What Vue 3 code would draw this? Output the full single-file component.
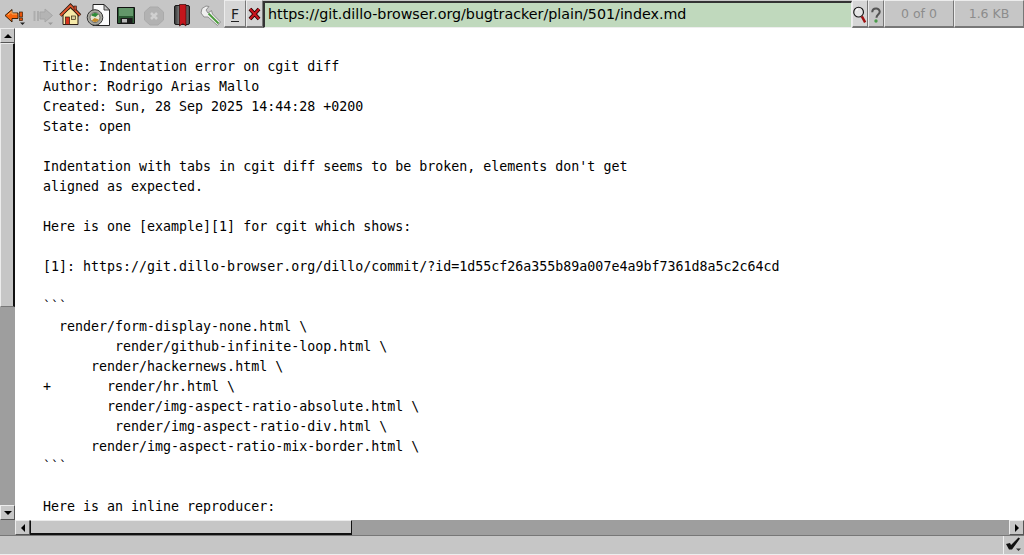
<template>
  <div class="browser">
    <div class="toolbar">
      <div class="tool-btn">
        <svg width="28" height="28" viewBox="0 0 28 28">
          <path d="M5 15.5 L12 9.5 V13 H18 V18.5 H12 V22 Z" fill="#f5650c" stroke="#3a2008" stroke-width="1"/>
          <path d="M8 15 L12 11.5 V14 H17" fill="none" stroke="#ffb060" stroke-width="1"/>
          <rect x="19.5" y="12" width="3" height="5" fill="#e8540a" stroke="#3a2008" stroke-width=".7"/>
          <rect x="19.5" y="18" width="3" height="2.6" fill="#e8540a" stroke="#3a2008" stroke-width=".7"/>
          <path d="M20 22.5 H25 L22.5 25 Z" fill="#222"/>
        </svg>
      </div>
      <div class="tool-btn">
        <svg width="28" height="28" viewBox="0 0 28 28">
          <path d="M5.5 11 H7.5 V21 H5.5 Z M9 11 H11 V21 H9 Z" fill="#adadad"/>
          <path d="M12 12 H17 V9 L24.5 15.5 L17 22 V19 H12 Z" fill="#b4b4b4" stroke="#a6a6a6"/>
          <path d="M20 22.5 H25 L22.5 25 Z" fill="#9a9a9a"/>
        </svg>
      </div>
      <div class="tool-btn">
        <svg width="28" height="28" viewBox="0 0 28 28">
          <path d="M7 14 V24.5 H22 V14 L14.5 8 Z" fill="#f6e9a8" stroke="#2a1a10" stroke-width="1"/>
          <path d="M4.5 15.5 L14.5 5.5 L24 15.5" fill="none" stroke="#2a1a10" stroke-width="3.4"/>
          <path d="M4.5 15.5 L14.5 5.5 L24 15.5" fill="none" stroke="#e0562e" stroke-width="1.8"/>
          <rect x="18" y="6" width="2.5" height="4" fill="#c8452a" stroke="#2a1a10" stroke-width=".6"/>
          <rect x="9.5" y="17" width="4" height="7.5" fill="#d8331c" stroke="#2a1a10" stroke-width=".7"/>
          <rect x="15.5" y="16" width="4" height="3.5" fill="#d8d0a0" stroke="#3a2a10" stroke-width=".7"/>
        </svg>
      </div>
      <div class="tool-btn">
        <svg width="28" height="28" viewBox="0 0 28 28">
          <path d="M9 4.5 H20 L25.5 10 V25.5 H9 Z" fill="#fbfbfb" stroke="#222" stroke-width="1"/>
          <path d="M20 4.5 V10 H25.5 Z" fill="#c4c4c4" stroke="#222" stroke-width=".8"/>
          <circle cx="11" cy="17.5" r="7.8" fill="#a8a8a0" stroke="#333" stroke-width="1"/>
          <circle cx="11" cy="17.5" r="5" fill="#e8e4d0" stroke="#555" stroke-width=".8"/>
          <path d="M7.2 15.5 A4.2 4.2 0 0 1 14.2 14.5 L11.5 17 Z" fill="#2f8a3a"/>
          <path d="M14.8 19.5 A4.2 4.2 0 0 1 7.8 20.5 L10.5 18 Z" fill="#c48a2a"/>
        </svg>
      </div>
      <div class="tool-btn">
        <svg width="28" height="28" viewBox="0 0 28 28">
          <path d="M5.5 7.5 H22.5 V23.5 H5.5 Z" fill="#2c5a34" stroke="#111" stroke-width="1"/>
          <rect x="7" y="8" width="14" height="8" fill="#63976a"/>
          <rect x="8.5" y="18" width="12" height="5.5" fill="#1c1c1c"/>
          <rect x="10" y="19" width="5" height="3.5" fill="#b8b8b8"/>
        </svg>
      </div>
      <div class="tool-btn">
        <svg width="28" height="28" viewBox="0 0 28 28">
          <path d="M10 7 H18 L23.5 12 V20 L18 25 H10 L4.5 20 V12 Z" fill="#b2b2b2" stroke="#aaa"/>
          <path d="M11 13 L17 19 M17 13 L11 19" stroke="#d0d0d0" stroke-width="2.6"/>
        </svg>
      </div>
      <div class="tool-btn">
        <svg width="28" height="28" viewBox="0 0 28 28">
          <defs>
            <linearGradient id="cover" x1="0" x2="1" y1="0" y2="0">
              <stop offset="0" stop-color="#303030"/>
              <stop offset=".5" stop-color="#a8a8a8"/>
              <stop offset="1" stop-color="#404040"/>
            </linearGradient>
          </defs>
          <rect x="6.5" y="5.5" width="15" height="19" rx="1.5" fill="url(#cover)" stroke="#1a1a1a"/>
          <path d="M11.5 4.5 H18 V26 L14.75 23.5 L11.5 26 Z" fill="#c4161c" stroke="#3a0808" stroke-width=".7"/>
        </svg>
      </div>
      <div class="tool-btn">
        <svg width="28" height="28" viewBox="0 0 28 28">
          <path d="M5 13 L6 8.5 L10 6 L13 6.5 L10 10 L12 13 L15.5 10.5 L16.5 14 L24.5 22 L21.5 25.5 L12 17 L8 17 Z" fill="#efefef" stroke="#8f8f8f"/>
          <path d="M12.5 13.5 L22.5 23.5" stroke="#4a9a3a" stroke-width="1.8"/>
        </svg>
      </div>
      <div class="raised f-btn"><span>F</span></div>
      <div class="raised x-btn">
        <svg width="13" height="14" viewBox="0 0 13 14">
          <path d="M2 2 L11 12 M11 2 L2 12" stroke="#200" stroke-width="3.8"/>
          <path d="M2 2 L11 12 M11 2 L2 12" stroke="#c8141c" stroke-width="2.1"/>
        </svg>
      </div>
      <div class="url">{{ url }}</div>
      <div class="raised search-btn">
        <svg width="15" height="26" viewBox="0 0 15 26">
          <circle cx="6" cy="11" r="5.2" fill="#e6e6e6" stroke="#111" stroke-width="1.2"/>
          <path d="M3.5 9 L5 7.8" stroke="#fff" stroke-width="1.6"/>
          <path d="M9.5 15.5 L13 22" stroke="#a01010" stroke-width="2.6"/>
        </svg>
      </div>
      <div class="raised help-btn">
        <svg width="15" height="26" viewBox="0 0 15 26">
          <path d="M3.5 11 C3.5 6 11.5 6 11.5 10.5 C11.5 13.5 8 13.5 8 17" fill="none" stroke="#555" stroke-width="2.2"/>
          <circle cx="7.5" cy="20.5" r="1.8" fill="#4a9a4a"/>
        </svg>
      </div>
      <div class="raised info find-count">0 of 0</div>
      <div class="raised info page-size">1.6 KB</div>
    </div>

    <div class="main">
      <div class="vscroll">
        <div class="sb-btn"><i class="arrow up"></i></div>
        <div class="thumb-v"></div>
        <div class="trough"></div>
        <div class="sb-btn"><i class="arrow down"></i></div>
      </div>
      <pre class="page">{{ pageText }}</pre>
    </div>

    <div class="hscroll">
      <div class="corner"></div>
      <div class="sb-btn"><i class="arrow left"></i></div>
      <div class="thumb-h"></div>
      <div class="trough"></div>
      <div class="sb-btn"><i class="arrow right"></i></div>
    </div>

    <div class="status">
      <div class="status-text"></div>
      <div class="status-check">
        <svg width="19" height="18" viewBox="0 0 19 18">
          <path d="M2 8 L6 7 L7 9 L14.5 1.5 L16 2.5 L8 13.5 L5 13.5 Z" fill="#111"/>
          <path d="M12 12.5 H17 L14.5 15 Z" fill="#333"/>
        </svg>
      </div>
    </div>
  </div>
</template>

<script setup>
const url = "https://git.dillo-browser.org/bugtracker/plain/501/index.md";

const pageText = `Title: Indentation error on cgit diff
Author: Rodrigo Arias Mallo
Created: Sun, 28 Sep 2025 14:44:28 +0200
State: open

Indentation with tabs in cgit diff seems to be broken, elements don't get
aligned as expected.

Here is one [example][1] for cgit which shows:

[1]: https://git.dillo-browser.org/dillo/commit/?id=1d55cf26a355b89a007e4a9bf7361d8a5c2c64cd

\`\`\`
  render/form-display-none.html \\
         render/github-infinite-loop.html \\
      render/hackernews.html \\
+       render/hr.html \\
        render/img-aspect-ratio-absolute.html \\
         render/img-aspect-ratio-div.html \\
      render/img-aspect-ratio-mix-border.html \\
\`\`\`

Here is an inline reproducer:`;
</script>

<style>
html,
body {
  margin: 0;
  background: #c6c6c6;
}
</style>

<style scoped>
.browser {
  width: 1024px;
  height: 555px;
  display: flex;
  flex-direction: column;
  background: #c6c6c6;
  overflow: hidden;
}

.toolbar {
  display: flex;
  height: 28px;
  flex: none;
}

.tool-btn {
  width: 28px;
  height: 28px;
  flex: none;
}

.tool-btn svg,
.raised svg,
.status-check svg {
  display: block;
}

.raised {
  box-sizing: border-box;
  height: 28px;
  border-top: 1px solid #ececec;
  border-left: 1px solid #ececec;
  border-right: 1px solid #777;
  border-bottom: 2px solid #777;
  display: flex;
  align-items: center;
  justify-content: center;
  flex: none;
}

.f-btn {
  width: 22px;
  background: #d6d6d6;
  font-family: "DejaVu Sans", sans-serif;
  font-size: 14px;
  color: #222;
}

.f-btn span {
  border-bottom: 1px solid #222;
  line-height: 13px;
  margin-top: 3px;
}

.x-btn {
  width: 17px;
  background: #d2d2d2;
}

.url {
  width: 589px;
  flex: none;
  box-sizing: border-box;
  height: 27px;
  margin-top: 1px;
  background: #c0d9bd;
  border-top: 2px solid #333;
  border-left: 2px solid #333;
  border-right: 1px solid #eee;
  border-bottom: 1px solid #eee;
  padding-left: 3px;
  font-family: "DejaVu Sans", sans-serif;
  font-size: 14.27px;
  line-height: 23px;
  color: #000;
  white-space: nowrap;
  overflow: hidden;
}

.search-btn {
  width: 16px;
  background: #d6d6d6;
}

.help-btn {
  width: 16px;
}

.info {
  font-family: "DejaVu Sans", sans-serif;
  font-size: 12.5px;
  color: #8c8c8c;
}

.find-count {
  width: 70px;
}

.page-size {
  flex: 1;
}

.main {
  flex: 1;
  display: flex;
  min-height: 0;
}

.vscroll {
  width: 15px;
  flex: none;
  display: flex;
  flex-direction: column;
  background: #9e9e9e;
}

.sb-btn {
  width: 15px;
  height: 15px;
  flex: none;
  box-sizing: border-box;
  background: #c6c6c6;
  border-top: 1px solid #ececec;
  border-left: 1px solid #ececec;
  border-right: 1px solid #555;
  border-bottom: 1px solid #555;
  display: flex;
  align-items: center;
  justify-content: center;
}

.thumb-v {
  height: 264px;
  flex: none;
  box-sizing: border-box;
  background: #c6c6c6;
  border-top: 1px solid #ececec;
  border-left: 1px solid #ececec;
  border-right: 2px solid #111;
  border-bottom: 1px solid #777;
}

.trough {
  flex: 1;
  background: #9e9e9e;
}

.arrow {
  width: 0;
  height: 0;
  display: block;
}

.arrow.up {
  border: 4px solid transparent;
  border-top: 0;
  border-bottom: 4px solid #000;
}

.arrow.down {
  border: 4px solid transparent;
  border-bottom: 0;
  border-top: 4px solid #000;
}

.arrow.left {
  border: 4px solid transparent;
  border-left: 0;
  border-right: 4px solid #000;
}

.arrow.right {
  border: 4px solid transparent;
  border-right: 0;
  border-left: 4px solid #000;
}

.page {
  flex: 1;
  margin: 0;
  padding: 29px 0 0 28px;
  background: #fff;
  color: #000;
  font-family: "DejaVu Sans Mono", monospace;
  font-size: 13.3px;
  line-height: 20px;
  overflow: hidden;
}

.hscroll {
  display: flex;
  height: 15px;
  flex: none;
}

.corner {
  width: 15px;
  flex: none;
  background: #9e9e9e;
}

.thumb-h {
  width: 322px;
  flex: none;
  box-sizing: border-box;
  background: #c6c6c6;
  border-top: 1px solid #ececec;
  border-left: 1px solid #111;
  border-right: 1px solid #111;
  border-bottom: 2px solid #111;
}

.status {
  height: 20px;
  flex: none;
  display: flex;
  border-top: 1px solid #777;
  border-bottom: 1px solid #eee;
  box-sizing: border-box;
  background: #c6c6c6;
}

.status-text {
  flex: 1;
}

.status-check {
  width: 20px;
  flex: none;
  border-left: 1px solid #eee;
}
</style>
